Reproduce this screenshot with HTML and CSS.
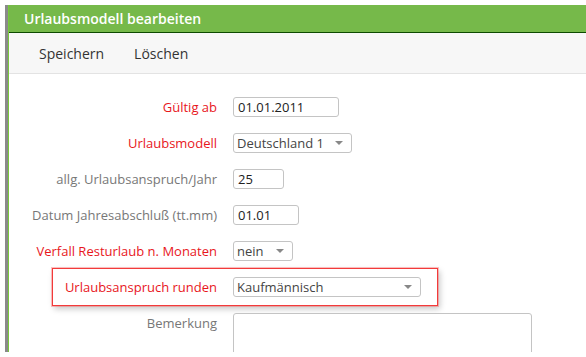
FILE: index.html
```html
<!DOCTYPE html>
<html lang="de">
<head>
<meta charset="utf-8">
<title>Urlaubsmodell bearbeiten</title>
<link rel="stylesheet" href="styles.css">
</head>
<body>
<div class="panel">
  <div class="inner">
    <div class="header">Urlaubsmodell bearbeiten</div>
    <div class="toolbar">
      <span class="tool">Speichern</span>
      <span class="tool">Löschen</span>
    </div>
    <div class="form">
      <div class="row">
        <label class="lbl req">Gültig ab</label>
        <div class="field"><span class="input w106">01.01.2011</span></div>
      </div>
      <div class="row">
        <label class="lbl req">Urlaubsmodell</label>
        <div class="field"><span class="input select w119">Deutschland 1<i class="arrow"></i></span></div>
      </div>
      <div class="row">
        <label class="lbl">allg. Urlaubsanspruch/Jahr</label>
        <div class="field"><span class="input w51">25</span></div>
      </div>
      <div class="row">
        <label class="lbl">Datum Jahresabschluß (tt.mm)</label>
        <div class="field"><span class="input w66">01.01</span></div>
      </div>
      <div class="row">
        <label class="lbl req">Verfall Resturlaub n. Monaten</label>
        <div class="field"><span class="input select w60">nein<i class="arrow"></i></span></div>
      </div>
      <div class="row hl">
        <div class="highlight"></div>
        <label class="lbl req">Urlaubsanspruch runden</label>
        <div class="field"><span class="input select w188">Kaufmännisch<i class="arrow"></i></span></div>
      </div>
      <div class="row">
        <label class="lbl">Bemerkung</label>
        <div class="field"><span class="textarea"></span></div>
      </div>
    </div>
  </div>
</div>
</body>
</html>
```

FILE: styles.css
```css
html, body {
  margin: 0;
  padding: 0;
  background: #fff;
}
body {
  padding: 5px 0 0 5px;
  font-family: "Open Sans", "Noto Sans", sans-serif;
  overflow: hidden;
}
.panel {
  height: 347px;
  border-left: 3px solid #8a8a8a;
}
.inner {
  height: 100%;
  border-left: 1px solid #79c83c;
}
.header {
  height: 27px;
  background: #76b94a;
  border-bottom: 1px solid #0d4a00;
  color: #fff;
  font-size: 14px;
  font-weight: 600;
  line-height: 27px;
  padding-left: 15px;
}
.toolbar {
  height: 40px;
  background: #f7f7f7;
  border-bottom: 1px solid #e3e3e3;
  display: flex;
  align-items: center;
  padding-left: 30px;
  gap: 30px;
}
.tool {
  font-size: 14px;
  color: #333;
}
.form {
  padding-top: 23px;
  display: flex;
  flex-direction: column;
  gap: 16px;
}
.row {
  display: grid;
  grid-template-columns: 208px auto;
  column-gap: 16px;
  align-items: start;
  position: relative;
}
.lbl {
  text-align: right;
  font-size: 13px;
  line-height: 20px;
  color: #777;
  white-space: nowrap;
}
.lbl.req {
  color: #e8161c;
}
.row:last-child .lbl {
  line-height: 18px;
  padding-top: 1px;
}
.field {
  display: flex;
}
.input {
  box-sizing: border-box;
  height: 20px;
  border: 1px solid #c4c4c4;
  border-radius: 3px;
  background: #fff;
  font-size: 13px;
  line-height: 18px;
  color: #222;
  padding-left: 4px;
  position: relative;
}
.select {
  color: #444;
  padding-left: 3px;
}
.arrow {
  position: absolute;
  right: 8px;
  top: 7px;
  width: 0;
  height: 0;
  border-left: 4px solid transparent;
  border-right: 4px solid transparent;
  border-top: 4px solid #888;
}
.w106 { width: 106px; }
.w119 { width: 119px; }
.w51 { width: 51px; }
.w66 { width: 66px; }
.w60 { width: 60px; }
.w188 { width: 188px; }
.textarea {
  box-sizing: border-box;
  width: 299px;
  height: 60px;
  border: 1px solid #c4c4c4;
  border-radius: 3px;
  background: #fff;
}
.highlight {
  position: absolute;
  left: 43px;
  top: -9px;
  width: 386px;
  height: 38px;
  box-sizing: border-box;
  border: 1px solid #f23a3a;
  box-shadow: 0 0 0 1px rgba(255, 80, 80, 0.35), 2px 3px 6px rgba(0, 0, 0, 0.22);
  pointer-events: none;
}
```
